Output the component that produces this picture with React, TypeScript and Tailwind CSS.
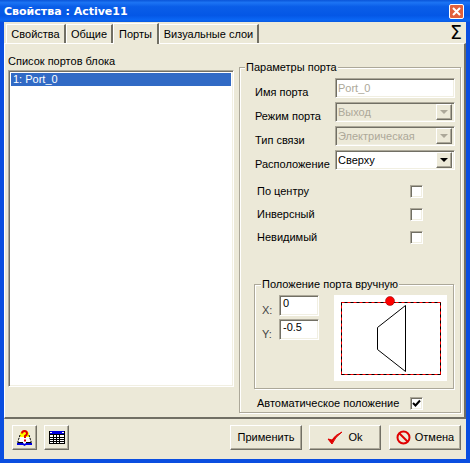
import React from "react";

const sunken = "border border-t-[#aca899] border-l-[#aca899] border-r-white border-b-white shadow-[inset_1px_1px_0_#716f64,inset_-1px_-1px_0_#f1efe2]";
const raised = "border border-t-white border-l-white border-r-[#716f64] border-b-[#716f64] shadow-[inset_-1px_-1px_0_#aca899]";
const group = "border border-[#aca899] shadow-[inset_1px_1px_0_white,1px_1px_0_white]";

function Tab({ label, active, w }: { label: string; active?: boolean; w: string }) {
  return (
    <div className={`${w} flex items-center justify-center border-l border-t border-t-white border-l-white border-r-2 border-r-[#716f64] ${active ? "h-[21px] -mb-px z-10 bg-[#ece9d8]" : "h-[19px]"} `}>
      <span>{label}</span>
    </div>
  );
}

function FormRow({ label, value, disabled, select, mb }: { label: string; value: string; disabled?: boolean; select?: boolean; mb?: string }) {
  return (
    <div className={`flex items-end h-5 ${mb ?? "mb-1"}`}>
      <div className="w-[95px] pl-[15px] -mb-[1px] whitespace-nowrap">{label}</div>
      <div className={`w-[120px] h-5 ${sunken} ${disabled && select ? "bg-[#ece9d8]" : "bg-white"} flex items-center justify-between pl-[2px] pr-[2px] ${disabled ? "text-[#aca899]" : "text-black"}`}>
        <span>{value}</span>
        {select && (
          <span className={`w-[16px] h-[16px] bg-[#ece9d8] ${raised} flex items-center justify-center`}>
            <span className={`border-x-[4px] border-x-transparent border-t-[4px] ${disabled ? "border-t-[#aca899]" : "border-t-black"}`} />
          </span>
        )}
      </div>
    </div>
  );
}

function Check({ label, checked, mb }: { label: string; checked?: boolean; mb?: string }) {
  return (
    <div className={`flex items-center h-[14px] ${mb ?? ""}`}>
      <div className="w-[170px] pl-[17px] whitespace-nowrap">{label}</div>
      <div className={`w-[13px] h-[13px] bg-white ${sunken} flex items-center justify-center`}>
        {checked && (
          <svg width="9" height="9" viewBox="0 0 9 9">
            <path d="M1 4 L3.5 6.5 L8 1.5" fill="none" stroke="black" strokeWidth="2" />
          </svg>
        )}
      </div>
    </div>
  );
}

function Num({ label, value }: { label: string; value: string }) {
  return (
    <div className="flex items-end h-[21px]">
      <span className="w-[24px] pl-[7px] text-[#444] -mb-[1px]">{label}</span>
      <div className={`w-[40px] h-[21px] bg-white ${sunken} pl-[3px] pt-px`}>{value}</div>
    </div>
  );
}

function HelpIcon() {
  return (
    <svg width="15" height="16" viewBox="0 0 15 16">
      <path d="M7.5 0 L10 1 L12 3 L12 8 L3 8 L3 3 L5 1 Z" fill="#ffff00" />
      <path d="M3 7 L0.5 13 L14.5 13 L12 7 Z" fill="#fff" />
      <path d="M3 5 L0.5 13 M12 5 L14.5 13" fill="none" stroke="#000" strokeDasharray="2 1" />
      <path d="M5 3.5 Q5 1 7.5 1 Q10 1 10 3.5 Q10 5 8 6 L8 8" fill="none" stroke="#e00000" strokeWidth="2" />
      <rect x="7" y="9.5" width="2" height="2" fill="#e00000" />
      <path d="M1 12.5 H6 M9 12.5 H14" stroke="#000" />
      <path d="M0 13 L6 13 L7.5 14 L9 13 L15 13 L15 15 L9 15 L7.5 16 L6 15 L0 15 Z" fill="#0000e0" />
    </svg>
  );
}

function TableIcon() {
  return (
    <svg width="16" height="13" viewBox="0 0 16 13">
      <rect x="0" y="0" width="16" height="13" fill="#000" />
      <rect x="1" y="0" width="14" height="3" fill="#0000e0" />
      <rect x="1" y="1" width="2" height="1" fill="#fff" />
      <rect x="13" y="1" width="2" height="1" fill="#fff" />
      <rect x="1" y="4" width="14" height="8" fill="#fff" />
      <path d="M1 6.5 H15 M1 8.5 H15 M1 10.5 H15 M4.5 4 V12 M7.5 4 V12 M10.5 4 V12" stroke="#000" strokeWidth="1" />
    </svg>
  );
}

export default function App() {
  return (
    <div className="w-[470px] h-[463px] bg-[#0a4ee0] text-[11px] leading-[13px] text-black [font-family:'Liberation_Sans',Arial,sans-serif] flex flex-col overflow-hidden">
      <div className="h-[22px] shrink-0 flex items-center justify-between pl-[4px] pr-[6px] bg-[linear-gradient(to_bottom,#0a55d8_0%,#1c74f4_12%,#0a5ee8_30%,#0457e6_70%,#0a66f4_90%,#0a5ae0_100%)]">
        <span className="text-white font-bold text-[11px] [font-family:'DejaVu_Sans',sans-serif]">Свойства : Active11</span>
        <div className="w-[15px] h-[15px] bg-[#e2603c] border border-white rounded-[2px] flex items-center justify-center">
          <svg width="9" height="9" viewBox="0 0 9 9"><path d="M1 1 L8 8 M8 1 L1 8" stroke="white" strokeWidth="2" /></svg>
        </div>
      </div>
      <div className="flex-1 mx-[4px] mb-[4px] bg-[#ece9d8] flex flex-col min-h-0">
        <div className="h-[21px] shrink-0 flex items-end pl-[2px] relative">
          <Tab label="Свойства" w="w-[60px]" />
          <Tab label="Общие" w="w-[47px]" />
          <Tab label="Порты" active w="w-[46px]" />
          <Tab label="Визуальные слои" w="w-[100px]" />
          <span className="absolute right-[4px] top-[1px] text-[19px] leading-[18px] [font-family:'DejaVu_Sans',sans-serif]">Σ</span>
        </div>
        <div className="h-[376px] shrink-0 border-t border-t-white border-l border-l-white border-r-2 border-r-[#716f64] border-b-2 border-b-[#716f64] flex">
          <div className="w-[234px] pl-[3px] pt-[11px] flex flex-col">
            <div className="h-[15px]">Список портов блока</div>
            <div className={`w-[226px] h-[317px] bg-white ${sunken} p-[2px]`}>
              <div className="h-[13px] bg-[#316ac5] text-white pl-[2px]">1: Port_0</div>
            </div>
          </div>
          <div className={`relative w-[222px] h-[346px] mt-[23px] ${group}`}>
            <span className="absolute left-[5px] -top-[7px] bg-[#ece9d8] px-px">Параметры порта</span>
            <div className="pt-[10px]">
              <FormRow label="Имя порта" value="Port_0" disabled />
              <FormRow label="Режим порта" value="Выход" disabled select />
              <FormRow label="Тип связи" value="Электрическая" disabled select />
              <FormRow label="Расположение" value="Сверху" select mb="mb-[14px]" />
              <Check label="По центру" mb="mb-[9px]" />
              <Check label="Инверсный" mb="mb-[9px]" />
              <Check label="Невидимый" mb="mb-[40px]" />
              <div className={`relative ml-[14px] w-[200px] h-[105px] ${group} flex pt-[10px]`}>
                <span className="absolute left-[6px] -top-[7px] bg-[#ece9d8] px-px">Положение порта вручную</span>
                <div className="flex flex-col gap-[3px]">
                  <Num label="X:" value="0" />
                  <Num label="Y:" value="-0.5" />
                </div>
                <svg className="ml-[15px]" width="113" height="86" viewBox="0 0 113 86">
                  <rect x="0" y="0" width="113" height="86" fill="#fff" />
                  <rect x="7.5" y="7.5" width="99" height="72" fill="none" stroke="#000" />
                  <rect x="7.5" y="7.5" width="99" height="72" fill="none" stroke="#f00" strokeDasharray="3 3" />
                  <path d="M71.5 10.5 V76.5 L43.5 54.5 V32.5 Z" fill="none" stroke="#000" />
                  <circle cx="56" cy="6" r="4.5" fill="#f00" stroke="#800000" strokeWidth="0.5" />
                </svg>
              </div>
              <div className="mt-[7px]">
                <Check label="Автоматическое положение" checked />
              </div>
            </div>
          </div>
        </div>
        <div className="flex-1 flex items-start pt-[6px] pl-[8px]">
          <div className={`w-[25px] h-[25px] ${raised} flex items-center justify-center`}><HelpIcon /></div>
          <div className={`w-[25px] h-[25px] ml-[7px] ${raised} flex items-center justify-center`}><TableIcon /></div>
          <div className={`w-[72px] h-[25px] ml-[161px] ${raised} flex items-center justify-center`}>Применить</div>
          <div className={`w-[72px] h-[25px] ml-[7px] ${raised} flex items-center justify-center gap-[5px]`}>
            <svg width="16" height="14" viewBox="0 0 16 14"><path d="M1 8 L5 13 Q8 6 15 1 Q8 4 5 9 Z" fill="#e00000" stroke="#e00000" /></svg>
            Ok
          </div>
          <div className={`w-[72px] h-[25px] ml-[8px] ${raised} flex items-center justify-center gap-[4px]`}>
            <svg width="15" height="15" viewBox="0 0 15 15"><circle cx="7.5" cy="7.5" r="6" fill="none" stroke="#e00000" strokeWidth="2" /><path d="M3.5 3.5 L11.5 11.5" stroke="#e00000" strokeWidth="2" /></svg>
            Отмена
          </div>
        </div>
      </div>
    </div>
  );
}
